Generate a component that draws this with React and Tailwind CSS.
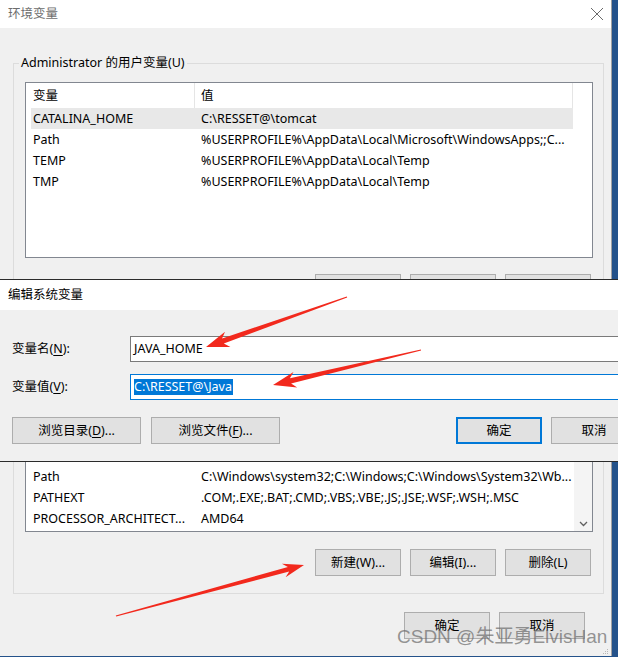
import React from "react";

const userVars = [
  ["CATALINA_HOME", "C:\\RESSET@\\tomcat"],
  ["Path", "%USERPROFILE%\\AppData\\Local\\Microsoft\\WindowsApps;;C..."],
  ["TEMP", "%USERPROFILE%\\AppData\\Local\\Temp"],
  ["TMP", "%USERPROFILE%\\AppData\\Local\\Temp"],
];

const sysVars = [
  ["Path", "C:\\Windows\\system32;C:\\Windows;C:\\Windows\\System32\\Wb..."],
  ["PATHEXT", ".COM;.EXE;.BAT;.CMD;.VBS;.VBE;.JS;.JSE;.WSF;.WSH;.MSC"],
  ["PROCESSOR_ARCHITECT...", "AMD64"],
];

// tapered red arrow, tail -> tip
const arrowPoints = (t, p, head = 21, half = 8, shaft = 2.6) => {
  const dx = p[0] - t[0];
  const dy = p[1] - t[1];
  const len = Math.hypot(dx, dy);
  const ux = dx / len;
  const uy = dy / len;
  const nx = -uy;
  const ny = ux;
  const bx = p[0] - ux * head;
  const by = p[1] - uy * head;
  const pts = [
    [t[0] + nx * 0.6, t[1] + ny * 0.6],
    [bx + ux * 3 + nx * shaft, by + uy * 3 + ny * shaft],
    [bx - ux * 2 + nx * half, by - uy * 2 + ny * half],
    p,
    [bx - ux * 2 - nx * half, by - uy * 2 - ny * half],
    [bx + ux * 3 - nx * shaft, by + uy * 3 - ny * shaft],
    [t[0] - nx * 0.6, t[1] - ny * 0.6],
  ];
  return pts.map((q) => q.map((v) => v.toFixed(1)).join(",")).join(" ");
};

const Btn = ({ children, w = "w-[86px]", primary = false }) => (
  <div
    className={`${w} h-[27px] flex items-center justify-center bg-[#e1e1e1] text-black ${
      primary ? "border-2 border-[#0078d7]" : "border border-[#adadad]"
    }`}
  >
    {children}
  </div>
);

const Row = ({ name, value, selected }) => (
  <div className={`flex items-center h-[21px] w-[542px] ${selected ? "bg-[#e8e8e8]" : ""}`}>
    <span className="w-[170px] pl-[2px] truncate">{name}</span>
    <span className="flex-1 whitespace-nowrap">{value}</span>
  </div>
);

const App = () => {
  return (
    <div className="relative w-[618px] h-[657px] overflow-hidden bg-[#24528a] font-['Noto_Sans','Noto_Sans_CJK_SC',sans-serif] text-[12.5px] leading-[18px] text-black">
      {/* main window: 环境变量 */}
      <div className="w-[612px] h-[656px] flex flex-col bg-[#f0f0f0] border-r border-[#a0a0a0]">
        <div className="h-[28px] shrink-0 bg-white flex items-center justify-between pl-[8px] pr-[5px]">
          <span className="text-[#6d6d6d]">环境变量</span>
          <svg width="14" height="14" viewBox="0 0 14 14" className="mr-[2px]">
            <path d="M1 1 L13 13 M13 1 L1 13" stroke="#6a6a6a" strokeWidth="1" />
          </svg>
        </div>

        {/* user variables */}
        <fieldset className="ml-[13px] mt-[26px] w-[591px] border border-[#dcdcdc] pb-[10px]">
          <legend className="ml-[5px] px-[2px]">Administrator 的用户变量(U)</legend>
          <div className="ml-[11px] mt-[10px] w-[568px] h-[176px] bg-white border border-[#828790]">
            <div className="flex h-[25px] w-[547px]">
              <div className="w-[168px] pl-[7px] flex items-center">变量</div>
              <div className="w-px bg-[#e5e5e5]" />
              <div className="flex-1 pl-[6px] flex items-center">值</div>
              <div className="w-px bg-[#e5e5e5]" />
            </div>
            <div className="ml-[5px]">
              {userVars.map(([n, v], i) => (
                <Row key={n} name={n} value={v} selected={i === 0} />
              ))}
            </div>
          </div>
          <div className="mt-[16px] flex justify-end gap-[9px] pr-[12px]">
            <Btn>新建(N)...</Btn>
            <Btn>编辑(E)...</Btn>
            <Btn>删除(D)</Btn>
          </div>
        </fieldset>

        {/* system variables */}
        <fieldset className="ml-[13px] mt-[8px] w-[591px] border border-[#dcdcdc] pb-[17px]">
          <legend className="ml-[5px] px-[2px]">系统变量(S)</legend>
          <div className="ml-[11px] mt-[10px] w-[568px] h-[184px] bg-white border border-[#828790] flex">
            <div className="flex-1 flex flex-col">
              <div className="flex h-[25px] w-[547px] shrink-0">
                <div className="w-[168px] pl-[7px] flex items-center">变量</div>
                <div className="w-px bg-[#e5e5e5]" />
                <div className="flex-1 pl-[6px] flex items-center">值</div>
              </div>
              <div className="flex-1 ml-[5px] pb-[2px] overflow-hidden flex flex-col justify-end">
                {sysVars.map(([n, v]) => (
                  <Row key={n} name={n} value={v} />
                ))}
              </div>
            </div>
            <div className="w-[18px] bg-[#f4f4f4] flex flex-col justify-end items-center pb-[4px]">
              <svg width="9" height="6" viewBox="0 0 9 6">
                <path d="M1 1 L4.5 4.5 L8 1" fill="none" stroke="#606060" strokeWidth="1.3" />
              </svg>
            </div>
          </div>
          <div className="mt-[17px] flex justify-end gap-[9px] pr-[12px]">
            <Btn>新建(W)...</Btn>
            <Btn>编辑(I)...</Btn>
            <Btn>删除(L)</Btn>
          </div>
        </fieldset>

        <div className="mt-[18px] flex justify-end gap-[9px] pr-[26px]">
          <Btn>确定</Btn>
          <Btn>取消</Btn>
        </div>
        <div className="mt-auto self-end mr-[3px] mb-[2px] grid grid-cols-3 gap-[1px]">
          {[0, 1, 2, 3, 4, 5, 6, 7, 8].map((k) => (
            <span key={k} className={`w-[1px] h-[1px] ${[2, 4, 5, 6, 7, 8].includes(k) ? "bg-[#b8b8b8]" : ""}`} />
          ))}
        </div>
      </div>

      {/* edit dialog: 编辑系统变量 */}
      <div className="absolute left-0 top-[279px] w-[649px] h-[183px] flex flex-col border-y border-[#2b2b2b] bg-[#f0f0f0]">
        <div className="h-[30px] shrink-0 bg-white flex items-center pl-[8px]">编辑系统变量</div>
        <div className="flex-1 px-[12px] pt-[26px]">
          <div className="flex items-center">
            <span className="w-[118px]">
              变量名(<span className="underline underline-offset-2">N</span>):
            </span>
            <div className="w-[507px] h-[26px] bg-white border border-[#7a7a7a] flex items-center pl-[3px]">
              JAVA_HOME
            </div>
          </div>
          <div className="flex items-center mt-[12px]">
            <span className="w-[118px]">
              变量值(<span className="underline underline-offset-2">V</span>):
            </span>
            <div className="w-[507px] h-[26px] bg-white border border-[#0078d7] flex items-center pl-[3px]">
              <span className="bg-[#0078d7] text-white leading-[16px] pr-[1px]">C:\RESSET@\Java</span>
            </div>
          </div>
          <div className="flex items-center mt-[17px]">
            <Btn w="w-[129px]">
              浏览目录(<span className="underline underline-offset-2">D</span>)...
            </Btn>
            <div className="ml-[10px]">
              <Btn w="w-[129px]">
                浏览文件(<span className="underline underline-offset-2">F</span>)...
              </Btn>
            </div>
            <div className="ml-auto flex gap-[9px]">
              <Btn primary>确定</Btn>
              <Btn>取消</Btn>
            </div>
          </div>
        </div>
      </div>

      {/* annotation arrows */}
      <svg className="absolute inset-0 pointer-events-none" width="618" height="657" viewBox="0 0 618 657">
        <polygon points={arrowPoints([347, 297], [206, 347])} fill="#f2291d" />
        <polygon points={arrowPoints([421, 350], [273, 385])} fill="#f2291d" />
        <polygon points={arrowPoints([116, 616], [304, 565], 19, 7, 2.4)} fill="#f2291d" />
      </svg>

      {/* watermark */}
      <div className="absolute left-[397px] top-[625px] font-['Liberation_Sans','Noto_Sans_CJK_SC',sans-serif] text-[19px] leading-[24px] text-[rgba(105,105,105,0.7)] whitespace-nowrap pointer-events-none">
        CSDN @朱亚勇ElvisHan
      </div>
    </div>
  );
};

export default App;
